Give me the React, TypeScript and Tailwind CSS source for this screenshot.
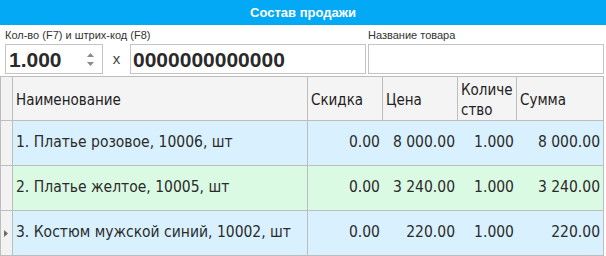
import React from 'react';

type Row = {
  name: string;
  discount: string;
  price: string;
  qty: string;
  sum: string;
  bg: string;
  current?: boolean;
};

const rows: Row[] = [
  { name: '1. Платье розовое, 10006, шт', discount: '0.00', price: '8 000.00', qty: '1.000', sum: '8 000.00', bg: 'bg-[#d9f1fe]' },
  { name: '2. Платье желтое, 10005, шт', discount: '0.00', price: '3 240.00', qty: '1.000', sum: '3 240.00', bg: 'bg-[#dbfae3]' },
  { name: '3. Костюм мужской синий, 10002, шт', discount: '0.00', price: '220.00', qty: '1.000', sum: '220.00', bg: 'bg-[#d9f1fe]', current: true },
];

const font = { fontFamily: '"Liberation Sans", Arial, sans-serif' };
const gridFont = { fontFamily: '"DejaVu Sans Condensed", "DejaVu Sans", sans-serif' };

export default function App() {
  return (
    <div className="w-[606px] h-[256px] bg-white overflow-hidden text-[#222]" style={font}>
      {/* Title bar */}
      <div className="h-[25px] bg-[#03a9f4] flex items-center justify-center text-white font-bold text-[13px]">
        Состав продажи
      </div>

      {/* Inputs */}
      <div className="flex">
        <div className="flex flex-col pl-[5px]">
          <div className="h-[19px] flex items-end pb-[3px] text-[11px] leading-none text-[#333]">
            Кол-во (F7) и штрих-код (F8)
          </div>
          <div className="flex items-center h-[30px]">
            <div className="w-[98px] h-[30px] border border-[#c4c4c4] flex items-center pl-[3px] pr-[8px]">
              <span className="flex-1 text-[21px] font-bold text-[#2a2a2a] leading-none">1.000</span>
              <div className="flex flex-col gap-[5px] items-center">
                <svg width="7" height="4" viewBox="0 0 7 4"><path d="M3.5 0L7 4H0z" fill="#8a8a8a" /></svg>
                <svg width="7" height="4" viewBox="0 0 7 4"><path d="M0 0h7L3.5 4z" fill="#8a8a8a" /></svg>
              </div>
            </div>
            <div className="w-[27px] text-center text-[15px] text-[#444]">x</div>
            <div className="w-[236px] h-[30px] border border-[#c4c4c4] flex items-center pl-[2px]">
              <span className="text-[21px] font-bold text-[#2a2a2a] leading-none">0000000000000</span>
            </div>
          </div>
        </div>
        <div className="flex flex-col ml-[2px]">
          <div className="h-[19px] flex items-end pb-[3px] text-[11px] leading-none text-[#333]">
            Название товара
          </div>
          <div className="w-[236px] h-[30px] border border-[#c4c4c4]" />
        </div>
      </div>

      {/* Grid */}
      <div
        className="mt-[2px] w-[604px] border-t border-l border-[#bdbdbd] grid grid-cols-[12px_295px_75px_75px_59px_87px] text-[15px]"
        style={gridFont}
      >
        {/* header */}
        <div className="h-[44px] bg-[#f2f2f2] border-r border-b border-[#bdbdbd]" />
        <div className="h-[44px] bg-[#f4f4f4] border-r border-b border-[#bdbdbd] flex items-center pl-[3px] pt-[3px]">Наименование</div>
        <div className="h-[44px] bg-[#f4f4f4] border-r border-b border-[#bdbdbd] flex items-center pl-[3px] pt-[3px]">Скидка</div>
        <div className="h-[44px] bg-[#f4f4f4] border-r border-b border-[#bdbdbd] flex items-center pl-[3px] pt-[3px]">Цена</div>
        <div className="h-[44px] bg-[#f4f4f4] border-r border-b border-[#bdbdbd] flex items-center pl-[3px] pt-[2px] leading-[20px]">
          <span>
            Количе
            <br />
            ство
          </span>
        </div>
        <div className="h-[44px] bg-[#f4f4f4] border-r border-b border-[#bdbdbd] flex items-center pl-[3px] pt-[3px]">Сумма</div>

        {rows.map((r) => (
          <React.Fragment key={r.name}>
            <div className="h-[45px] bg-[#f2f2f2] border-r border-b border-[#bdbdbd] flex items-center pl-[3px]">
              {r.current && (
                <svg width="4" height="7" viewBox="0 0 4 7"><path d="M0 0l4 3.5L0 7z" fill="#6b6b6b" /></svg>
              )}
            </div>
            <div className={`h-[45px] ${r.bg} border-r border-b border-[#bdbdbd] flex items-center pl-[3px] text-[15.5px] text-[#2b2b2b]`}>{r.name}</div>
            <div className={`h-[45px] ${r.bg} border-b border-[#bdbdbd] flex items-center justify-end pr-[3px] text-[15.5px] text-[#2b2b2b]`}>{r.discount}</div>
            <div className={`h-[45px] ${r.bg} border-b border-[#bdbdbd] flex items-center justify-end pr-[3px] text-[15.5px] text-[#2b2b2b]`}>{r.price}</div>
            <div className={`h-[45px] ${r.bg} border-b border-[#bdbdbd] flex items-center justify-end pr-[3px] text-[15.5px] text-[#2b2b2b]`}>{r.qty}</div>
            <div className={`h-[45px] ${r.bg} border-r border-b border-[#bdbdbd] flex items-center justify-end pr-[3px] text-[15.5px] text-[#2b2b2b]`}>{r.sum}</div>
          </React.Fragment>
        ))}
      </div>
    </div>
  );
}
